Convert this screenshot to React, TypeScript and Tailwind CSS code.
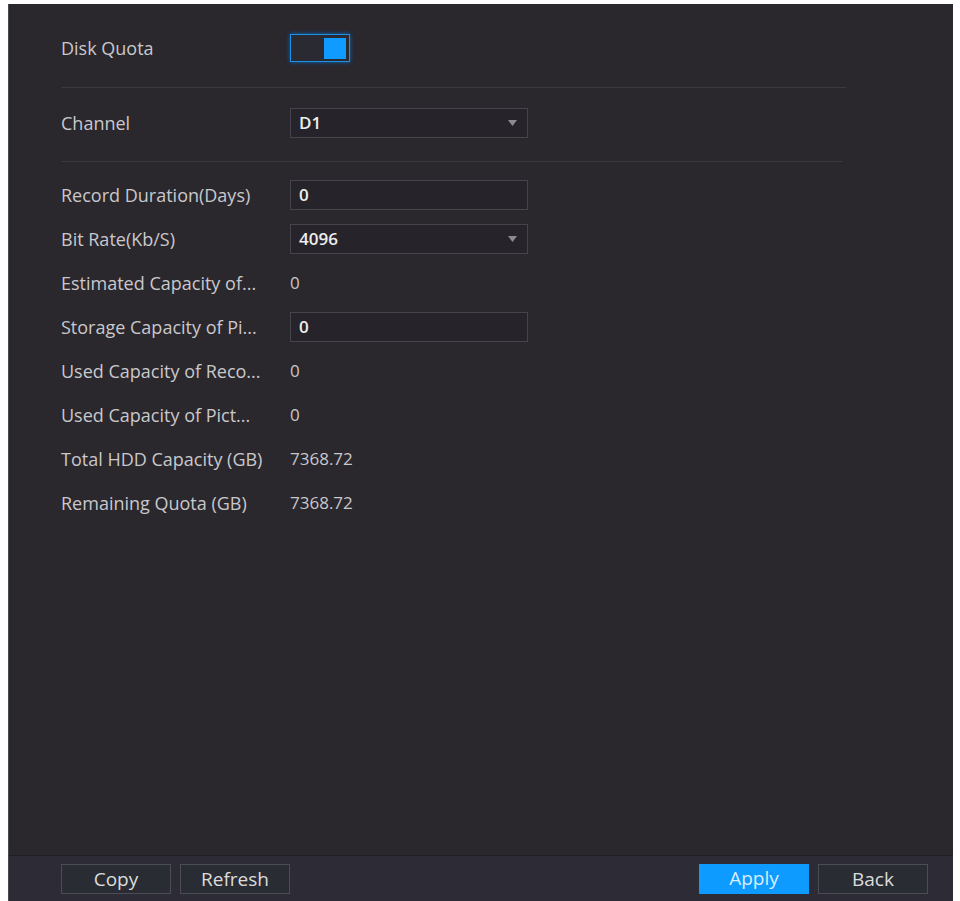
import React from 'react';

const font = { fontFamily: '"Open Sans", "Noto Sans", sans-serif' };

interface RowProps {
  label: string;
  children: React.ReactNode;
}

const Row = ({ label, children }: RowProps): React.ReactElement => (
  <div className="flex h-[44px] items-center">
    <div className="w-[229px] shrink-0 whitespace-nowrap text-[18px] text-[#c9c8cc]">{label}</div>
    {children}
  </div>
);

const Field = ({ value, select }: { value: string; select?: boolean }): React.ReactElement => (
  <div className="flex h-[30px] w-[238px] items-center justify-between border border-[#45434b] bg-[#26242a] pl-[8px] pr-[10px]">
    <span className="text-[17px] font-semibold text-[#eeeeee]">{value}</span>
    {select && (
      <svg width="9" height="6" viewBox="0 0 9 6">
        <path d="M0 0 L9 0 L4.5 6 Z" fill="#8d8b92" />
      </svg>
    )}
  </div>
);

const Value = ({ children }: { children: React.ReactNode }): React.ReactElement => (
  <span className="text-[17px] text-[#c9c8cc]">{children}</span>
);

const Btn = ({ label, primary }: { label: string; primary?: boolean }): React.ReactElement => (
  <button
    className={
      primary
        ? 'h-[30px] w-[110px] bg-[#0d9bff] text-[19px] text-[#d9eeff]'
        : 'h-[30px] w-[110px] border border-[#4a4d55] bg-[#292c33] text-[19px] text-[#dcdcdc]'
    }
  >
    {label}
  </button>
);

export default function App(): React.ReactElement {
  return (
    <div className="h-[901px] w-[960px] bg-white pl-[8px] pt-[4px]" style={font}>
      <div className="flex h-[897px] w-[945px] flex-col border-l border-[#4b4950] bg-[#2a272d]">
        <div className="flex-1 pl-[52px] pt-[22px]">
          <div className="flex h-[44px] items-center">
            <div className="w-[229px] shrink-0 text-[18px] text-[#c9c8cc]">Disk Quota</div>
            <div className="flex h-[28px] w-[60px] items-center justify-end border border-[#1c8fe6] bg-[#2a2a33] pr-[3px] shadow-[0_0_4px_#0b6cc0]">
              <div className="h-[21px] w-[22px] bg-[#0f9bff]" />
            </div>
          </div>
          <div className="mt-[17px] h-px w-[785px] bg-[#3a3840]" />
          <div className="mt-[13px]">
            <Row label="Channel">
              <Field value="D1" select />
            </Row>
          </div>
          <div className="mt-[16px] h-px w-[782px] bg-[#3a3840]" />
          <div className="mt-[11px]">
            <Row label="Record Duration(Days)">
              <Field value="0" />
            </Row>
            <Row label="Bit Rate(Kb/S)">
              <Field value="4096" select />
            </Row>
            <Row label="Estimated Capacity of...">
              <Value>0</Value>
            </Row>
            <Row label="Storage Capacity of Pi...">
              <Field value="0" />
            </Row>
            <Row label="Used Capacity of Reco...">
              <Value>0</Value>
            </Row>
            <Row label="Used Capacity of Pict...">
              <Value>0</Value>
            </Row>
            <Row label="Total HDD Capacity (GB)">
              <Value>7368.72</Value>
            </Row>
            <Row label="Remaining Quota (GB)">
              <Value>7368.72</Value>
            </Row>
          </div>
        </div>
        <div className="flex h-[46px] items-center justify-between border-t border-[#201e24] bg-[#2d2b35] pl-[52px] pr-[25px]">
          <div className="flex gap-[9px]">
            <Btn label="Copy" />
            <Btn label="Refresh" />
          </div>
          <div className="flex gap-[9px]">
            <Btn label="Apply" primary />
            <Btn label="Back" />
          </div>
        </div>
      </div>
    </div>
  );
}
